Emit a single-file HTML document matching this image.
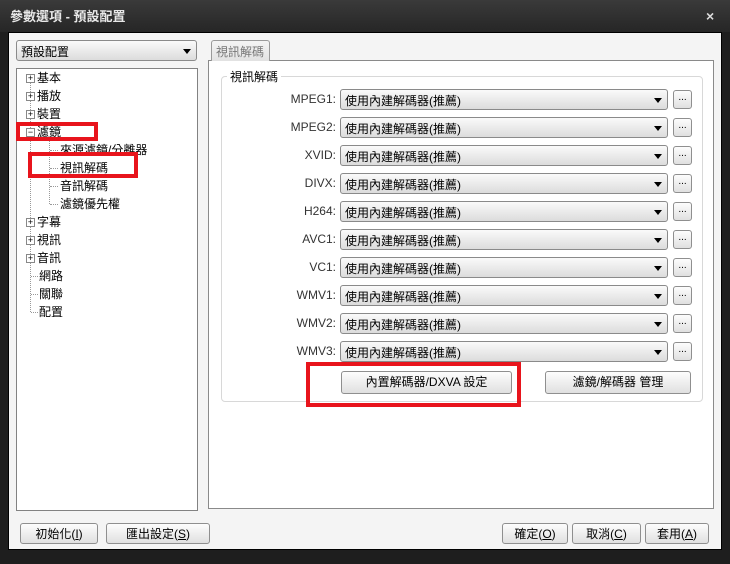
<!DOCTYPE html>
<html><head><meta charset="utf-8"><style>
*{margin:0;padding:0;box-sizing:border-box}
body{width:730px;height:564px;background:#1e1e1e;position:relative;overflow:hidden;font-family:"Liberation Sans","Noto Sans CJK TC",sans-serif;font-size:12px;color:#000}
.abs{position:absolute}
.title{left:0;top:0;width:730px;height:32px;background:linear-gradient(#3a3a3a,#262626);color:#e8e8e8;font-size:13px;font-weight:bold;padding:6px 10px}
.client{left:8px;top:32px;width:714px;height:518px;background:#f4f4f4;border:1px solid #000}
.combo{background:linear-gradient(#fafafa,#dcdcdc);border:1px solid #8a8a8a;border-radius:3px;height:21px;padding:2px 4px;font-size:12px}
.combo:after{content:"";position:absolute;right:5px;top:8px;border-left:4px solid transparent;border-right:4px solid transparent;border-top:5px solid #000}
.btn{background:linear-gradient(#fdfdfd,#e0e0e0);border:1px solid #8f8f8f;border-radius:3px;text-align:center;font-size:12px;line-height:20px}
.tree div{position:absolute;left:0;height:18px;line-height:18px;font-size:12px}
.pl{display:inline-block;width:9px;height:9px;border:1px solid #888;background:#fff;font-size:9px;line-height:7px;text-align:center;vertical-align:middle;margin-right:2px;color:#000;position:relative;z-index:1}
.lbl{position:absolute;width:110px;text-align:right;font-size:12px;color:#333}
.red{border:4px solid #e8141c}
.dv{position:absolute;border-left:1px dotted #999;width:0}
.dh{position:absolute;border-top:1px dotted #999;height:0}
</style></head><body>
<div class="abs title">參數選項 - 預設配置</div>
<div class="abs" style="left:706px;top:8px;color:#ddd;font-size:14px;font-weight:bold">×</div>
<div class="abs client"></div>
<div class="abs combo" style="left:16px;top:40px;width:181px">預設配置</div>
<div class="abs" style="left:16px;top:68px;width:182px;height:443px;background:#fff;border:1px solid #828282"></div>
<div class="dv" style="left:30px;top:80px;height:232px"></div>
<div class="dv" style="left:49px;top:140px;height:64px"></div>
<div class="dh" style="left:50px;top:150px;width:8px"></div>
<div class="dh" style="left:50px;top:168px;width:8px"></div>
<div class="dh" style="left:50px;top:186px;width:8px"></div>
<div class="dh" style="left:50px;top:204px;width:8px"></div>
<div class="dh" style="left:31px;top:276px;width:7px"></div>
<div class="dh" style="left:31px;top:294px;width:7px"></div>
<div class="dh" style="left:31px;top:312px;width:7px"></div>
<div class="abs tree" style="left:26px;top:69px;width:170px">
<div style="top:0"><span class="pl">+</span>基本</div>
<div style="top:18px"><span class="pl">+</span>播放</div>
<div style="top:36px"><span class="pl">+</span>裝置</div>
<div style="top:54px"><span class="pl">−</span>濾鏡</div>
<div style="top:72px;left:34px">來源濾鏡/分離器</div>
<div style="top:90px;left:34px">視訊解碼</div>
<div style="top:108px;left:34px">音訊解碼</div>
<div style="top:126px;left:34px">濾鏡優先權</div>
<div style="top:144px"><span class="pl">+</span>字幕</div>
<div style="top:162px"><span class="pl">+</span>視訊</div>
<div style="top:180px"><span class="pl">+</span>音訊</div>
<div style="top:198px;left:13px">網路</div>
<div style="top:216px;left:13px">關聯</div>
<div style="top:234px;left:13px">配置</div>
</div>
<div class="abs red" style="left:16px;top:122px;width:82px;height:19px"></div>
<div class="abs red" style="left:28px;top:152px;width:110px;height:26px"></div>
<div class="abs" style="left:208px;top:60px;width:506px;height:449px;background:#fff;border:1px solid #8a8a8a"></div>
<div class="abs" style="left:211px;top:40px;width:59px;height:21px;background:linear-gradient(#f4f4f4,#e2e2e2);border:1px solid #9a9a9a;border-bottom:none;border-radius:3px 3px 0 0;color:#777;padding:2px 4px">視訊解碼</div>
<div class="abs" style="left:221px;top:76px;width:482px;height:326px;border:1px solid #d8d8d8;border-radius:4px"></div>
<div class="abs" style="left:227px;top:68px;background:#fff;padding:0 3px">視訊解碼</div>
<div id="rows"></div>
<div class="abs btn" style="left:341px;top:371px;width:171px;height:23px">內置解碼器/DXVA 設定</div>
<div class="abs btn" style="left:545px;top:371px;width:146px;height:23px">濾鏡/解碼器 管理</div>
<div class="abs red" style="left:306px;top:362px;width:215px;height:45px"></div>
<div class="abs btn" style="left:20px;top:523px;width:78px;height:21px">初始化(<u>I</u>)</div>
<div class="abs btn" style="left:106px;top:523px;width:104px;height:21px">匯出設定(<u>S</u>)</div>
<div class="abs btn" style="left:502px;top:523px;width:66px;height:21px">確定(<u>O</u>)</div>
<div class="abs btn" style="left:572px;top:523px;width:69px;height:21px">取消(<u>C</u>)</div>
<div class="abs btn" style="left:645px;top:523px;width:64px;height:21px">套用(<u>A</u>)</div>
<script>
var n=["MPEG1:","MPEG2:","XVID:","DIVX:","H264:","AVC1:","VC1:","WMV1:","WMV2:","WMV3:"],h="";
n.forEach(function(t,i){var y=89+i*28;
h+='<div class="lbl" style="left:226px;top:'+(y+3)+'px">'+t+'</div>';
h+='<div class="abs combo" style="left:340px;top:'+y+'px;width:328px">使用內建解碼器(推薦)</div>';
h+='<div class="abs btn" style="left:673px;top:'+(y+1)+'px;width:19px;height:19px;line-height:14px;font-size:10px">...</div>';});
document.getElementById("rows").innerHTML=h;
</script>
</body></html>
